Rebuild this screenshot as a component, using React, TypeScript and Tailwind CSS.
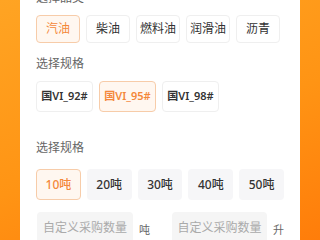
import { useState } from 'react'

const CATEGORIES = ['汽油', '柴油', '燃料油', '润滑油', '沥青']
const GRADES = ['国VI_92#', '国VI_95#', '国VI_98#']
const AMOUNTS = ['10吨', '20吨', '30吨', '40吨', '50吨']

const font = { fontFamily: '"Noto Sans", "Noto Sans CJK SC", sans-serif' }

export default function App() {
  const [category, setCategory] = useState('汽油')
  const [grade, setGrade] = useState('国VI_95#')
  const [amount, setAmount] = useState('10吨')

  return (
    <div
      className="flex justify-center w-[320px] h-[240px] overflow-hidden bg-[linear-gradient(160deg,#ffa423_0%,#ff9414_55%,#ff7d0a_100%)]"
      style={font}
    >
      {/* White panel */}
      <div className="flex flex-col w-[280px] h-full bg-white">
        {/* Category */}
        <div className="px-4">
          <div className="mt-[-10px] h-4 leading-4 text-[12px] text-[#666]">选择品类</div>
          <div className="flex gap-[6px] mt-[9px]">
            {CATEGORIES.map((c) => (
              <button
                key={c}
                onClick={() => setCategory(c)}
                className={
                  c === category
                    ? 'w-[44px] h-[28px] rounded-[4px] border border-[#f7cca9] bg-[#fff7f0] text-[12px] text-[#f4883a]'
                    : 'w-[44px] h-[28px] rounded-[4px] border border-[#efefef] bg-white text-[12px] text-[#333]'
                }
              >
                {c}
              </button>
            ))}
          </div>

          {/* Grade */}
          <div className="mt-[13px] h-4 leading-4 text-[12px] text-[#666]">选择规格</div>
          <div className="flex gap-[6px] mt-[9px]">
            {GRADES.map((g) => (
              <button
                key={g}
                onClick={() => setGrade(g)}
                className={
                  g === grade
                    ? 'w-[57px] h-[31px] rounded-[4px] border border-[#f7cca9] bg-[#fff7f0] text-[11px] font-semibold text-[#f4883a]'
                    : 'w-[57px] h-[31px] rounded-[4px] border border-[#efefef] bg-white text-[11px] font-semibold text-[#333]'
                }
              >
                {g}
              </button>
            ))}
          </div>
        </div>

        {/* Divider band */}
        <div className="mx-[7px] mt-[14px] h-[6px] rounded-[3px] bg-[#efefef]" />

        {/* Amount */}
        <div className="px-4">
          <div className="mt-[14px] h-4 leading-4 text-[12px] text-[#666]">选择规格</div>
          <div className="flex gap-[6px] mt-[13px]">
            {AMOUNTS.map((a) => (
              <button
                key={a}
                onClick={() => setAmount(a)}
                className={
                  a === amount
                    ? 'w-[45px] h-[31px] rounded-[4px] border border-[#f7cca9] bg-[#fff7f0] text-[12px] font-medium text-[#f4883a]'
                    : 'w-[45px] h-[31px] rounded-[4px] border border-transparent bg-[#f6f6f8] text-[12px] font-medium text-[#333]'
                }
              >
                {a}
              </button>
            ))}
          </div>

          {/* Custom inputs */}
          <div className="flex items-start mt-[12px]">
            <div className="flex items-center justify-center w-[100px] h-[32px] ml-px rounded-[4px] bg-[#f5f5f5] text-[12px] text-[#aaa]">
              自定义采购数量
            </div>
            <span className="ml-[6px] mt-[10px] text-[11px] leading-4 text-[#666]">吨</span>
            <div className="flex items-center justify-center w-[99px] h-[32px] ml-[22px] rounded-[4px] bg-[#f5f5f5] text-[12px] text-[#aaa]">
              自定义采购数量
            </div>
            <span className="ml-[6px] mt-[10px] text-[11px] leading-4 text-[#666]">升</span>
          </div>
        </div>
      </div>
    </div>
  )
}
